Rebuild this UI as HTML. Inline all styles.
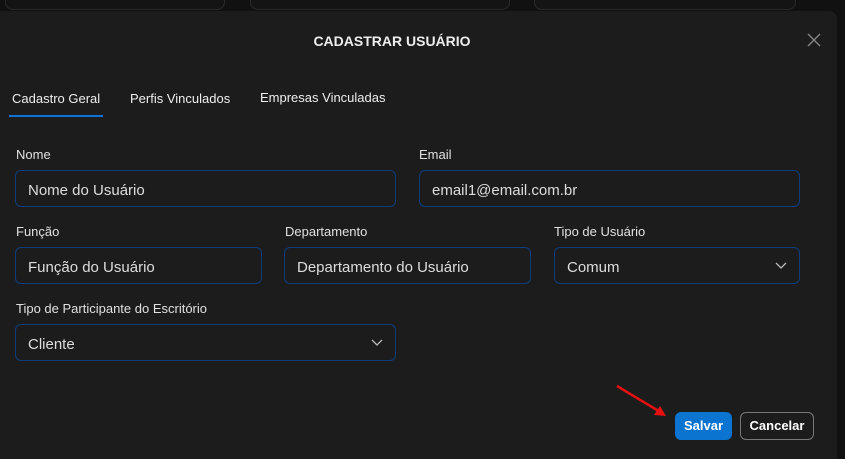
<!DOCTYPE html>
<html style="overflow:hidden;width:845px;height:459px"><head><meta charset="utf-8"><style>
*{box-sizing:border-box;margin:0;padding:0}
body{width:845px;height:459px;background:#111;font-family:"Liberation Sans",sans-serif;position:relative;overflow:hidden;color:#e6e6e6}
.card{position:absolute;top:-10px;height:20px;border:1px solid #2a2a2a;border-radius:8px;background:#141414}
.modal{position:absolute;left:0;top:11px;width:837px;height:448px;background:#1c1c1c;border-radius:0 8px 0 0}
.abs{position:absolute}
.lbl{position:absolute;font-size:13px;color:#e0e0e0}
.inp{position:absolute;height:37px;border:1px solid #0d3d7d;border-radius:6px;font-size:15px;color:#ddd;padding:2px 12px 0;line-height:35px;background:#1c1c1c}
.chev{position:absolute;right:12px;top:14px}
</style></head><body>
<div class="card" style="left:5px;width:220px"></div>
<div class="card" style="left:250px;width:260px"></div>
<div class="card" style="left:534px;width:262px"></div>
<div class="modal"></div>
<div class="abs" style="left:0;width:784px;top:33px;text-align:center;font-size:14px;font-weight:bold;color:#eee">CADASTRAR USUÁRIO</div>
<svg class="abs" style="left:807px;top:33px" width="14" height="14"><path d="M1 1L13 13M13 1L1 13" stroke="#888" stroke-width="1.3"/></svg>
<div class="abs" style="left:12px;top:91px;font-size:13px;color:#eee">Cadastro Geral</div>
<div class="abs" style="left:130px;top:91px;font-size:13px;color:#eee">Perfis Vinculados</div>
<div class="abs" style="left:260px;top:90px;font-size:13px;color:#eee">Empresas Vinculadas</div>
<div class="abs" style="left:9px;top:115px;width:94px;height:2px;background:#0a74d6"></div>
<div class="lbl" style="left:16px;top:147px">Nome</div>
<div class="lbl" style="left:419px;top:147px">Email</div>
<div class="inp" style="left:15px;top:170px;width:381px">Nome do Usuário</div>
<div class="inp" style="left:419px;top:170px;width:381px">email1@email.com.br</div>
<div class="lbl" style="left:16px;top:224px">Função</div>
<div class="lbl" style="left:285px;top:224px">Departamento</div>
<div class="lbl" style="left:554px;top:224px">Tipo de Usuário</div>
<div class="inp" style="left:15px;top:247px;width:247px">Função do Usuário</div>
<div class="inp" style="left:284px;top:247px;width:247px">Departamento do Usuário</div>
<div class="inp" style="left:554px;top:247px;width:246px">Comum<svg class="chev" width="12" height="8"><path d="M1 1L6 6L11 1" stroke="#bbb" fill="none" stroke-width="1.3"/></svg></div>
<div class="lbl" style="left:16px;top:301px">Tipo de Participante do Escritório</div>
<div class="inp" style="left:15px;top:324px;width:381px">Cliente<svg class="chev" width="12" height="8"><path d="M1 1L6 6L11 1" stroke="#bbb" fill="none" stroke-width="1.3"/></svg></div>
<div class="abs" style="left:675px;top:412px;width:57px;height:28px;background:#0a74d0;border-radius:6px;font-size:13px;font-weight:bold;color:#fff;text-align:center;line-height:28px">Salvar</div>
<div class="abs" style="left:740px;top:412px;width:74px;height:28px;border:1px solid #777;border-radius:6px;font-size:13px;font-weight:bold;color:#fff;text-align:center;line-height:26px">Cancelar</div>
<svg class="abs" style="left:610px;top:380px" width="65" height="40"><path d="M7 6L52 33" stroke="#e61010" stroke-width="2.5"/><path d="M56 36L44 35L50 26Z" fill="#e61010"/></svg>
<div class="abs" style="left:837px;top:0;width:8px;height:459px;background:#111"></div>
</body></html>
